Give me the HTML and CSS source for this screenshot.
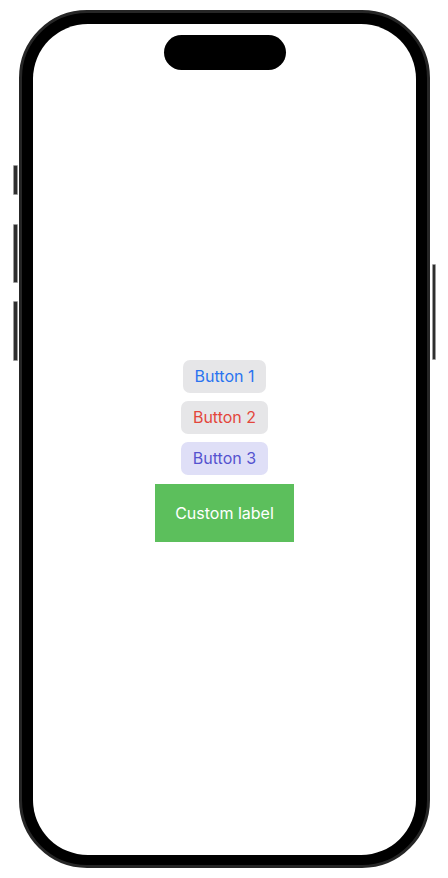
FILE: index.html
```html
<!DOCTYPE html>
<html lang="en">
<head>
<meta charset="utf-8">
<title>Buttons</title>
<link rel="stylesheet" href="styles.css">
</head>
<body>
<div class="device">
  <span class="side-btn side-mute"></span>
  <span class="side-btn side-vol-up"></span>
  <span class="side-btn side-vol-down"></span>
  <span class="side-btn side-power"></span>
  <div class="frame">
    <div class="screen">
      <div class="island"></div>
      <div class="stack">
        <button class="btn btn-gray btn-blue">Button 1</button>
        <button class="btn btn-gray btn-red">Button 2</button>
        <button class="btn btn-indigo">Button 3</button>
        <button class="btn-custom">Custom label</button>
      </div>
    </div>
  </div>
</div>
</body>
</html>
```

FILE: styles.css
```css
html, body {
  margin: 0;
  padding: 0;
  background: #ffffff;
}

body {
  width: 448px;
  height: 878px;
  overflow: hidden;
  font-family: Inter, "Liberation Sans", sans-serif;
}

.device {
  position: relative;
  width: 448px;
  height: 878px;
  padding: 10px 18px 10px 19px;
  box-sizing: border-box;
}

.frame {
  width: 411px;
  height: 858px;
  box-sizing: border-box;
  border-radius: 68px;
  background: #000;
  border: 3px solid #262626;
  padding: 11px 11px 10px 11px;
}

.screen {
  width: 100%;
  height: 100%;
  box-sizing: border-box;
  background: #fff;
  border-radius: 55px;
  display: flex;
  flex-direction: column;
  align-items: center;
}

.island {
  margin-top: 11px;
  width: 122px;
  height: 35px;
  border-radius: 18px;
  background: #000;
  flex: none;
}

.stack {
  margin-top: 290px;
  display: flex;
  flex-direction: column;
  align-items: center;
  gap: 8px;
}

.btn {
  font-family: Inter, "Liberation Sans", sans-serif;
  font-size: 16px;
  line-height: 21px;
  padding: 6px 12px;
  border: none;
  border-radius: 7px;
  margin: 0;
}

.btn-gray { background: #e6e6e8; }
.btn-blue { color: #2a74f0; }
.btn-red { color: #e3463c; }
.btn-indigo { background: #dfdff7; color: #5553cf; }

.btn-custom {
  font-family: Inter, "Liberation Sans", sans-serif;
  font-size: 16px;
  line-height: 21px;
  padding: 19px 20px 18px;
  margin-top: 1px;
  border: none;
  border-radius: 0;
  background: #5cbf5c;
  color: #fff;
}

.side-btn {
  position: absolute;
  background: #2e2e2e;
  border: 1px solid #9a9a9a;
  box-sizing: border-box;
  border-radius: 1px;
}

.side-mute { left: 13px; top: 165px; width: 5px; height: 30px; }
.side-vol-up { left: 13px; top: 224px; width: 5px; height: 59px; }
.side-vol-down { left: 13px; top: 301px; width: 5px; height: 60px; }
.side-power { left: 432px; top: 264px; width: 4px; height: 96px; }
```
